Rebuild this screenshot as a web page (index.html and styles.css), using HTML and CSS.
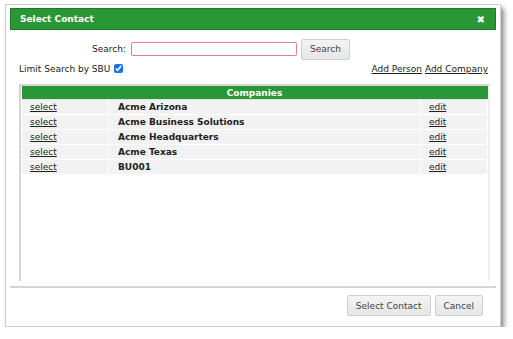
FILE: index.html
```html
<!DOCTYPE html>
<html lang="en">
<head>
  <meta charset="UTF-8">
  <title>Select Contact</title>
  <link rel="stylesheet" href="styles.css">
</head>
<body>
  <div class="dialog">
    <div class="titlebar">
      <span class="title">Select Contact</span>
      <span class="close">&#10006;</span>
    </div>
    <div class="content">
      <div class="search-row">
        <label for="q">Search:</label>
        <input id="q" type="text" class="search-input">
        <button class="btn">Search</button>
      </div>
      <div class="options-row">
        <label class="limit">Limit Search by SBU <input type="checkbox" checked></label>
        <div class="links"><a href="#">Add Person</a> <a href="#">Add Company</a></div>
      </div>
      <div class="results">
        <table>
          <thead>
            <tr><th colspan="3">Companies</th></tr>
          </thead>
          <tbody>
            <tr><td class="c-sel"><a href="#">select</a></td><td class="c-name">Acme Arizona</td><td class="c-edit"><a href="#">edit</a></td></tr>
            <tr><td class="c-sel"><a href="#">select</a></td><td class="c-name">Acme Business Solutions</td><td class="c-edit"><a href="#">edit</a></td></tr>
            <tr><td class="c-sel"><a href="#">select</a></td><td class="c-name">Acme Headquarters</td><td class="c-edit"><a href="#">edit</a></td></tr>
            <tr><td class="c-sel"><a href="#">select</a></td><td class="c-name">Acme Texas</td><td class="c-edit"><a href="#">edit</a></td></tr>
            <tr><td class="c-sel"><a href="#">select</a></td><td class="c-name">BU001</td><td class="c-edit"><a href="#">edit</a></td></tr>
          </tbody>
        </table>
      </div>
    </div>
    <div class="footer">
      <button class="btn">Select Contact</button>
      <button class="btn">Cancel</button>
    </div>
  </div>
</body>
</html>
```

FILE: styles.css
```css
body {
  margin: 0;
  background: #fff;
  font-family: "DejaVu Sans", Verdana, sans-serif;
  font-size: 9px;
  color: #222;
}
.dialog {
  margin: 4px 0 0 5px;
  width: 486px;
  padding: 3px 4px 3px 4px;
  border: 1px solid #cfcfcf;
  background: #fff;
  box-shadow: 3px 4px 5px rgba(0, 0, 0, 0.45);
}
.titlebar {
  height: 20px;
  background: #2a9737;
  border: 1px solid #1e7a2a;
  color: #fff;
  display: flex;
  align-items: center;
  justify-content: space-between;
  padding: 0 10px 0 9px;
}
.title {
  font-weight: bold;
  font-size: 9px;
}
.close {
  font-size: 10px;
  font-weight: bold;
}
.content {
  padding: 0 6px 0 9px;
}
.search-row {
  display: flex;
  align-items: center;
  padding-left: 73px;
  margin-top: 8px;
  height: 22px;
}
.search-row label {
  margin-right: 5px;
}
.search-input {
  width: 162px;
  height: 12px;
  padding: 0 1px;
  border: 1px solid #e67aa6;
  border-radius: 2px;
  outline: none;
  margin: 0 4px 0 0;
}
.btn {
  font-family: "DejaVu Sans", Verdana, sans-serif;
  font-size: 9px;
  color: #444;
  background: linear-gradient(#f4f4f4, #e6e6e6);
  border: 1px solid #cfcfcf;
  border-radius: 2px;
  height: 21px;
  padding: 0 8px;
}
.options-row {
  display: flex;
  justify-content: space-between;
  align-items: center;
  margin-top: 2px;
  height: 14px;
}
.limit input {
  width: 9px;
  height: 9px;
  margin: 0 0 0 1px;
  vertical-align: -1px;
  accent-color: #1a73e8;
}
.links {
  margin-right: 2px;
}
a {
  color: #222;
}
.results {
  box-sizing: border-box;
  margin-top: 8px;
  height: 197px;
  border: 2px solid #d4d4d4;
  border-right-color: #eee;
  border-bottom: none;
}
table {
  width: 100%;
  border-collapse: collapse;
}
th {
  background: #2a9737;
  color: #fff;
  font-weight: bold;
  height: 13px;
  padding: 0;
}
td {
  background: #f2f2f2;
  border: 1px solid #fff;
  border-top-color: #e2e2e2;
  height: 14px;
  padding: 0 0 0 8px;
}
.c-sel {
  width: 78px;
}
.c-name {
  font-weight: bold;
  padding-left: 9px;
}
.c-edit {
  width: 58px;
}
.footer {
  border-top: 2px solid #d4d4d4;
  height: 35px;
  display: flex;
  justify-content: flex-end;
  align-items: center;
  gap: 4px;
  padding-right: 13px;
  margin-top: 5px;
}
```
